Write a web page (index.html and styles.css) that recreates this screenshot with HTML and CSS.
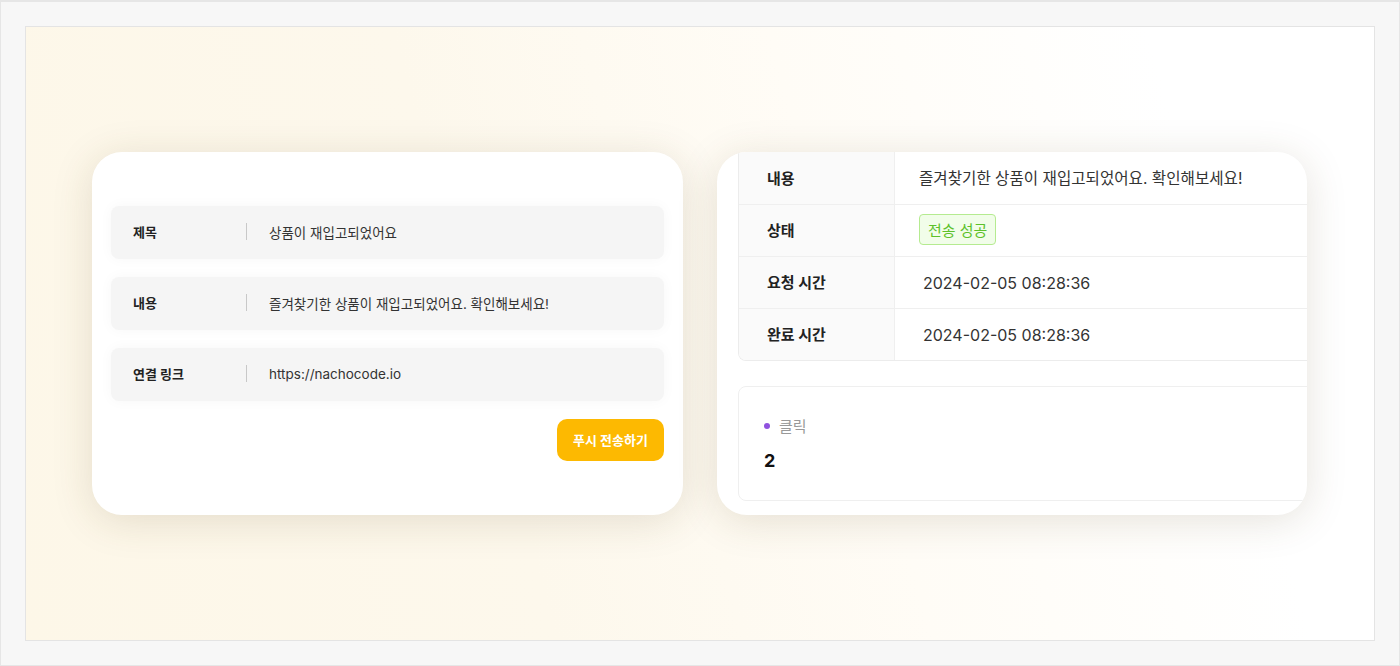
FILE: index.html
```html
<!DOCTYPE html>
<html lang="ko">
<head>
<meta charset="utf-8">
<link rel="stylesheet" href="styles.css">
</head>
<body>
<div class="frame">
  <div class="panel">
    <div class="card card-left">
      <div class="field">
        <span class="field-label">제목</span>
        <span class="field-sep"></span>
        <span class="field-value">상품이 재입고되었어요</span>
      </div>
      <div class="field">
        <span class="field-label">내용</span>
        <span class="field-sep"></span>
        <span class="field-value">즐겨찾기한 상품이 재입고되었어요. 확인해보세요!</span>
      </div>
      <div class="field">
        <span class="field-label">연결 링크</span>
        <span class="field-sep"></span>
        <span class="field-value">https://nachocode.io</span>
      </div>
      <div class="actions">
        <button class="push-btn">푸시 전송하기</button>
      </div>
    </div>
    <div class="card card-right">
      <div class="detail-table">
        <div class="detail-row">
          <div class="detail-label">내용</div>
          <div class="detail-value">즐겨찾기한 상품이 재입고되었어요. 확인해보세요!</div>
        </div>
        <div class="detail-row">
          <div class="detail-label">상태</div>
          <div class="detail-value"><span class="tag-success">전송 성공</span></div>
        </div>
        <div class="detail-row">
          <div class="detail-label">요청 시간</div>
          <div class="detail-value time">2024-02-05 08:28:36</div>
        </div>
        <div class="detail-row">
          <div class="detail-label">완료 시간</div>
          <div class="detail-value time">2024-02-05 08:28:36</div>
        </div>
      </div>
      <div class="stat-box">
        <div class="stat-title"><span class="stat-dot"></span>클릭</div>
        <div class="stat-num">2</div>
      </div>
    </div>
  </div>
</div>
</body>
</html>
```
FILE: styles.css
```css
* { box-sizing: border-box; }
html, body { margin: 0; padding: 0; }
body {
  font-family: "Inter", "Noto Sans CJK KR", sans-serif;
  background: #f7f7f7;
  color: #222;
}
.frame {
  width: 1400px;
  height: 666px;
  border: 1px solid #e6e6e6;
  border-top-width: 2px;
  padding: 24px;
  background: #f7f7f7;
}
.panel {
  height: 615px;
  border: 1px solid #e4e4e4;
  background: linear-gradient(75deg, #fdf7e8 0%, #fdf8ec 35%, #fffcf6 60%, #ffffff 85%);
  display: flex;
  align-items: center;
  justify-content: flex-start;
  padding-left: 66px;
  gap: 34px;
}
.card {
  height: 363px;
  background: #fff;
  border-radius: 30px;
  box-shadow: 0 6px 40px rgba(90, 70, 30, 0.15);
}
.card-left {
  width: 591px;
  padding: 54px 19px 0 19px;
}
.field {
  height: 53px;
  margin-bottom: 18px;
  background: #f5f5f5;
  border-radius: 8px;
  box-shadow: 0 0 14px rgba(0, 0, 0, 0.035);
  display: flex;
  align-items: center;
  padding-left: 22px;
  padding-bottom: 2px;
  font-size: 13.5px;
}
.field-label {
  width: 113px;
  font-weight: 700;
  color: #222;
  font-size: 13px;
}
.field-sep {
  width: 1px;
  height: 17px;
  background: #c8c8c8;
  margin-right: 22px;
}
.field-value { color: #333; }
.actions {
  display: flex;
  justify-content: flex-end;
}
.push-btn {
  width: 107px;
  height: 42px;
  border: none;
  border-radius: 10px;
  background: #fdb901;
  color: #fff;
  font-family: "Inter", "Noto Sans CJK KR", sans-serif;
  font-size: 13px;
  font-weight: 700;
  padding: 0 0 2px 0;
}
.card-right {
  width: 590px;
  overflow: hidden;
  padding-left: 21px;
}
.detail-table {
  width: 620px;
  border-left: 1px solid #ececec;
  border-bottom: 1px solid #ececec;
  border-bottom-left-radius: 8px;
  overflow: hidden;
}
.detail-row {
  display: flex;
  height: 52px;
  border-top: 1px solid #efefef;
}
.detail-row:first-child { border-top: none; }
.detail-label {
  width: 156px;
  background: #fafafa;
  border-right: 1px solid #efefef;
  display: flex;
  align-items: center;
  padding-left: 28px;
  padding-bottom: 2px;
  font-size: 15px;
  font-weight: 700;
  color: #222;
}
.detail-value {
  display: flex;
  align-items: center;
  padding-left: 24px;
  padding-bottom: 2px;
  font-size: 15.6px;
  color: #333;
}
.detail-value.time {
  padding-left: 28px;
  padding-bottom: 0;
  font-size: 16px;
}
.tag-success {
  display: inline-flex;
  align-items: center;
  height: 31px;
  padding: 0 8px 1px 8px;
  background: #f1fde9;
  border: 1px solid #b5eb90;
  border-radius: 4px;
  color: #5cc12a;
  font-size: 15px;
}
.stat-box {
  width: 620px;
  height: 115px;
  margin-top: 25px;
  border: 1px solid #efefef;
  border-radius: 8px;
  padding: 27px 0 0 25px;
}
.stat-title {
  display: flex;
  align-items: center;
  font-size: 15px;
  color: #999;
  height: 22px;
}
.stat-dot {
  width: 6px;
  height: 6px;
  border-radius: 50%;
  background: #9052df;
  margin-right: 9px;
  margin-top: 1px;
}
.stat-num {
  margin-top: 14px;
  font-size: 18px;
  font-weight: 700;
  color: #111;
}
```
